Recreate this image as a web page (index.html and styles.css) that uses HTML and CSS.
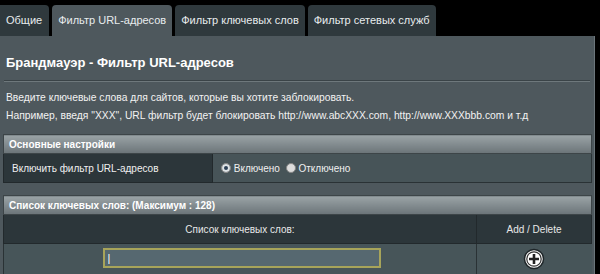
FILE: index.html
```html
<!DOCTYPE html>
<html lang="ru">
<head>
    <meta charset="UTF-8">
    <title>Фильтр URL-адресов</title>
    <link rel="stylesheet" href="styles.css">
</head>
<body>
    <div class="tabs">
        <div class="tab">Общие</div>
        <div class="tab active">Фильтр URL-адресов</div>
        <div class="tab">Фильтр ключевых слов</div>
        <div class="tab">Фильтр сетевых служб</div>
    </div>
    <div class="panel">
        <h1>Брандмауэр - Фильтр URL-адресов</h1>
        <div class="divider"></div>
        <p class="desc">Введите ключевые слова для сайтов, которые вы хотите заблокировать.<br>
        Например, введя "XXX", URL фильтр будет блокировать http://www.abcXXX.com, http://www.XXXbbb.com и т.д</p>

        <table class="settings">
            <tr><th colspan="2" class="section">Основные настройки</th></tr>
            <tr>
                <td class="label">Включить фильтр URL-адресов</td>
                <td class="value">
                    <span class="radio checked"></span> Включено
                    <span class="radio"></span> Отключено
                </td>
            </tr>
        </table>

        <table class="settings keywords">
            <tr><th colspan="2" class="section">Список ключевых слов: (Максимум : 128)</th></tr>
            <tr class="head">
                <td class="col-main">Список ключевых слов:</td>
                <td class="col-action">Add / Delete</td>
            </tr>
            <tr class="entry">
                <td class="col-main"><input type="text" class="keyword" value="|"></td>
                <td class="col-action">
                    <svg class="add" width="22" height="22" viewBox="0 0 22 22">
                        <circle cx="11" cy="11" r="9.5" fill="#fff" stroke="#1e2528" stroke-width="1.5"/>
                        <circle cx="11" cy="11" r="7.2" fill="none" stroke="#333" stroke-width="1.2"/>
                        <path d="M11 6v10M6 11h10" stroke="#222" stroke-width="2.6"/>
                    </svg>
                </td>
            </tr>
        </table>
    </div>
</body>
</html>
```

FILE: styles.css
```css
body {
    margin: 0;
    background: #000;
    font-family: "Liberation Sans", Arial, sans-serif;
    font-size: 10px;
    color: #fff;
    width: 600px;
    height: 274px;
    overflow: hidden;
}

.tabs {
    display: flex;
    gap: 3px;
    padding-top: 5px;
    height: 31px;
    font-size: 11px;
}

.tab {
    background: #2f393d;
    color: #e8ecee;
    padding: 0 6px;
    line-height: 31px;
    border-radius: 4px 4px 0 0;
}

.tab:first-child {
    border-radius: 0 4px 0 0;
    padding: 0 7px 0 6px;
}

.tab.active {
    background: #4e585d;
    padding: 0 6px;
}

.panel {
    background: #4e585d;
    width: 595px;
    height: 238px;
    border-right: 1px solid #6b757a;
    box-sizing: border-box;
    overflow: hidden;
}

h1 {
    margin: 0;
    padding: 19px 0 0 6px;
    font-size: 13px;
    font-weight: bold;
    color: #fff;
    line-height: 16px;
}

.divider {
    margin: 9px 4px 0 4px;
    border-top: 1px solid #3a4347;
    border-bottom: 1px solid #6e787c;
}

.desc {
    margin: 7px 0 0 6px;
    font-size: 10.3px;
    line-height: 18px;
    color: #f2f2f2;
}

.settings {
    width: 589px;
    margin: 9px 0 0 3px;
    border-collapse: collapse;
}

.settings.keywords {
    margin-top: 12px;
}

.section {
    text-align: left;
    height: 18px;
    padding: 0 5px;
    font-size: 10px;
    font-weight: bold;
    color: #fff;
    background: linear-gradient(#9aa3a6, #6b7478);
    border: 1px solid #3d4548;
}

.label {
    width: 200px;
    height: 28px;
    padding: 0 0 0 8px;
    background: #2c363a;
    border: 1px solid #22292c;
    color: #f0f0f0;
}

.value {
    background: #475458;
    border: 1px solid #2a3235;
    padding: 0 8px;
    color: #f0f0f0;
}

.radio {
    display: inline-block;
    width: 8px;
    height: 8px;
    border-radius: 50%;
    background: #ddd;
    border: 1px solid #888;
    vertical-align: -1px;
}

.radio.checked {
    background: #dfe4e6;
    box-shadow: inset 0 0 0 2px #dfe4e6, inset 0 0 0 4px #2b3f55;
}

.value .radio:nth-of-type(2) {
    margin-left: 3px;
}

.head td {
    height: 26px;
    background: #2c363a;
    text-align: center;
    border: 1px solid #22292c;
    color: #e8e8e8;
    font-size: 10px;
}

.col-action {
    width: 112px;
}

.entry td {
    height: 32px;
    background: #475559;
    text-align: center;
    vertical-align: top;
    padding-top: 4px;
    border-left: 1px solid #2a3235;
}

.keyword {
    width: 278px;
    height: 20px;
    box-sizing: border-box;
    background: #566870;
    border: 2px solid #a7a45a;
    color: #fff;
    font-family: inherit;
    font-size: 11px;
    padding: 0 3px;
    margin-left: 3px;
}

.add {
    display: block;
    margin: 0 auto;
}
```
